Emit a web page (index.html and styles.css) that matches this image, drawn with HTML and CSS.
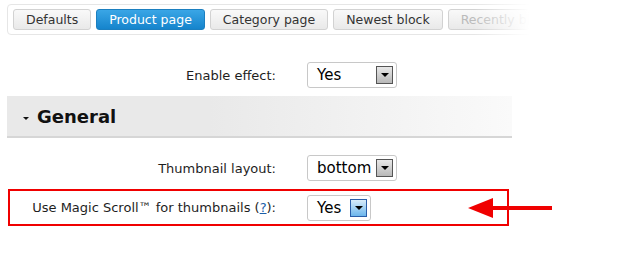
FILE: index.html
```html
<!DOCTYPE html>
<html lang="en">

<head>
    <meta charset="UTF-8" />
    <title>Magic Scroll settings</title>
    <link rel="stylesheet" href="styles.css">
</head>

<body>
    <div class="page">
        <div class="tabs">
            <span class="tab">Defaults</span>
            <span class="tab active">Product page</span>
            <span class="tab">Category page</span>
            <span class="tab">Newest block</span>
            <span class="tab muted">Recently block</span>
            <div class="fade"></div>
        </div>

        <div class="row first">
            <label class="label">Enable effect:</label>
            <div class="select wide">
                <span class="value">Yes</span>
                <span class="btn"><i></i></span>
            </div>
        </div>

        <div class="section">
            <span class="caret"></span>
            <h2>General</h2>
        </div>

        <div class="row">
            <label class="label">Thumbnail layout:</label>
            <div class="select wide">
                <span class="value">bottom</span>
                <span class="btn"><i></i></span>
            </div>
        </div>

        <div class="row marked">
            <label class="label">Use Magic Scroll&trade; for thumbnails (<a href="#">?</a>):</label>
            <div class="select">
                <span class="value">Yes</span>
                <span class="btn hot"><i></i></span>
            </div>
        </div>

        <div class="arrow">
            <span class="head"></span>
            <span class="shaft"></span>
        </div>
    </div>
</body>

</html>
```

FILE: styles.css
```css
:root {
    --text: #1e1e1e;
    --border: #c8c8c8;
    --red: #f00000;
    --base-font: 'DejaVu Sans', Verdana, sans-serif;
}

html,
body {
    margin: 0;
    padding: 0;
    background: #fff;
    color: var(--text);
    font-family: var(--base-font);
}

.page {
    position: relative;
    width: 622px;
    height: 274px;
    overflow: hidden;
}

/* tab strip */

.tabs {
    position: relative;
    display: flex;
    gap: 5px;
    margin: 4px 0 0 7px;
    padding: 4px 5px;
    width: 620px;
    border: 1px solid #e6e6e6;
    border-radius: 4px;
}

.tab {
    flex: none;
    height: 19px;
    line-height: 19px;
    padding: 0 12px;
    font-size: 12.5px;
    color: #333;
    background: linear-gradient(#f9f9f9, #e9e9e9);
    border: 1px solid #d2d2d2;
    border-radius: 3px;
}

.tab.active {
    color: #fff;
    background: linear-gradient(#3aa6e6, #1584cc);
    border-color: #1b7fc0;
}

.tab.muted {
    color: #bbb;
}

.fade {
    position: absolute;
    top: -1px;
    bottom: -1px;
    left: 466px;
    right: -2px;
    background: linear-gradient(to right, rgba(255, 255, 255, 0), #fff 55px);
}

/* form rows */

.row {
    display: flex;
    align-items: center;
    gap: 31px;
    height: 26px;
}

.row.first {
    margin-top: 27px;
}

.label {
    width: 276px;
    text-align: right;
    font-size: 13px;
}

.label a {
    color: #1a5ea8;
}

.select {
    display: flex;
    align-items: center;
    justify-content: space-between;
    box-sizing: border-box;
    height: 26px;
    width: 64px;
    padding: 0 3px 0 9px;
    border: 1px solid var(--border);
    border-radius: 3px;
    font-size: 15px;
    color: #000;
}

.select.wide {
    width: 90px;
}

.btn {
    box-sizing: border-box;
    width: 17px;
    height: 18px;
    display: flex;
    align-items: center;
    justify-content: center;
    border: 1px solid #555;
    background: linear-gradient(#e8e8e8, #b8b8b8);
}

.btn i {
    border-left: 4px solid transparent;
    border-right: 4px solid transparent;
    border-top: 4px solid #000;
}

.btn.hot {
    border-color: #2a5ea8;
    background: linear-gradient(#d8ecfa, #6cb6ec);
}

/* section header */

.section {
    display: flex;
    align-items: center;
    gap: 8px;
    margin: 8px 0 17px 7px;
    width: 489px;
    height: 40px;
    padding-left: 16px;
    border-bottom: 2px solid #d6d6d6;
    background: linear-gradient(to right, #e9e9e9 40%, #fafafa 100%);
}

.caret {
    border-left: 3px solid transparent;
    border-right: 3px solid transparent;
    border-top: 3px solid #111;
    margin-top: 4px;
}

.section h2 {
    margin: 0;
    font-size: 18px;
    font-weight: bold;
    color: #111;
}

.row.marked {
    box-sizing: border-box;
    margin: 8px 0 0 8px;
    width: 501px;
    height: 37px;
    gap: 31px;
    border: 2px solid var(--red);
}

.row.marked .label {
    width: 266px;
}

/* pointer arrow */

.arrow {
    position: absolute;
    left: 468px;
    top: 198px;
    display: flex;
    align-items: center;
}

.arrow .head {
    border-top: 10px solid transparent;
    border-bottom: 10px solid transparent;
    border-right: 25px solid var(--red);
}

.arrow .shaft {
    width: 59px;
    height: 4px;
    background: var(--red);
}
```
